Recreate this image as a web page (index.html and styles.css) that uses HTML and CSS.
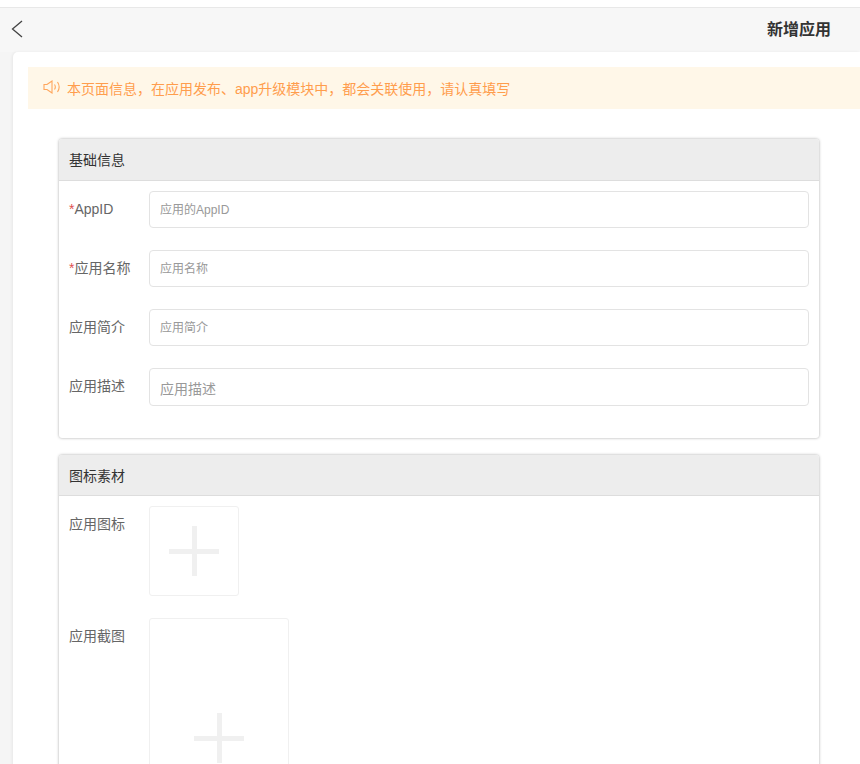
FILE: index.html
```html
<!DOCTYPE html>
<html lang="zh">
<head>
<meta charset="utf-8">
<title>新增应用</title>
<link rel="stylesheet" href="styles.css">
</head>
<body>
<header class="topbar">
  <svg class="back" width="12" height="18" viewBox="0 0 12 18"><path d="M11 1 L1.500 9 L11 17" fill="none" stroke="#444" stroke-width="1.3"/></svg>
  <h1 class="title">新增应用</h1>
</header>
<main class="main">
  <div class="notice">
    <svg class="speaker" width="18" height="14" viewBox="0 0 18 14"><path d="M1 4.5h3L9 1v12L4 9.5H1z M11.5 4.5c1 1.5 1 3.500 0 5 M14.500 2c2 3 2 7 0 10" fill="none" stroke="#ffa65c" stroke-width="1.100"/></svg>
    <span>本页面信息，在应用发布、app升级模块中，都会关联使用，请认真填写</span>
  </div>
  <section class="card first">
    <div class="card-head">基础信息</div>
    <div class="card-body">
      <div class="row">
        <label class="label"><i class="req">*</i>AppID</label>
        <input class="input" placeholder="应用的AppID">
      </div>
      <div class="row">
        <label class="label"><i class="req">*</i>应用名称</label>
        <input class="input" placeholder="应用名称">
      </div>
      <div class="row">
        <label class="label">应用简介</label>
        <input class="input" placeholder="应用简介">
      </div>
      <div class="row">
        <label class="label">应用描述</label>
        <textarea class="input area" placeholder="应用描述"></textarea>
      </div>
    </div>
  </section>
  <section class="card">
    <div class="card-head">图标素材</div>
    <div class="card-body media">
      <div class="row">
        <label class="label">应用图标</label>
        <div class="tile icon-tile"><span class="plus"></span></div>
      </div>
      <div class="row">
        <label class="label">应用截图</label>
        <div class="tile shot-tile"><span class="plus"></span></div>
      </div>
    </div>
  </section>
</main>
</body>
</html>
```
FILE: styles.css
```css
html, body {
  margin: 0;
  height: 764px;
  overflow: hidden;
}
body {
  background: #f5f5f5;
  padding-top: 7px;
  box-sizing: border-box;
  font-family: "Liberation Sans", "Noto Sans CJK SC", sans-serif;
  font-size: 14px;
  color: #666;
  position: relative;
}
body::before {
  content: "";
  position: absolute;
  inset: 0 0 auto 0;
  height: 7px;
  background: #fff;
}
.topbar {
  height: 44px;
  border-top: 1px solid #e8e8e8;
  background: #f7f7f7;
  display: flex;
  align-items: center;
  justify-content: space-between;
  padding: 0 29px 0 11px;
}
.back { display: block; margin-top: -2px; }
.title {
  margin: 0;
  font-size: 16px;
  font-weight: 700;
  color: #333;
  line-height: 44px;
}
.main {
  margin-left: 13px;
  padding-top: 15px;
  height: 720px;
  background: #fff;
  border-top-left-radius: 5px;
  box-shadow: -1px 0 3px rgba(0, 0, 0, .06);
}
.notice {
  margin-left: 15px;
  height: 42px;
  background: #fff7e8;
  color: #ff9d4d;
  display: flex;
  align-items: center;
  padding-left: 15px;
  gap: 6px;
  font-size: 14px;
}
.speaker { display: block; margin-top: -3px; }
.card {
  margin-left: 46px;
  width: 760px;
  box-sizing: border-box;
  margin-top: 17px;
  background: #fff;
  border-radius: 3px;
  box-shadow: 0 0 3px rgba(0, 0, 0, .35);
}
.card.first { margin-top: 30px; }
.card-head {
  height: 40px;
  line-height: 42px;
  padding-left: 10px;
  background: #ededed;
  border-bottom: 1px solid #ddd;
  border-radius: 3px 3px 0 0;
  color: #333;
}
.first .card-head { height: 41px; }
.card-body { padding: 10px; }
.row {
  display: flex;
  align-items: flex-start;
  margin-bottom: 22px;
}
.label {
  width: 80px;
  flex: none;
  line-height: 36px;
}
.req { font-style: normal; color: #e0524f; }
.input {
  flex: 1;
  min-width: 0;
  height: 37px;
  box-sizing: border-box;
  border: 1px solid #e3e3e3;
  border-radius: 4px;
  padding: 0 10px;
  font: 12px "Liberation Sans", "Noto Sans CJK SC", sans-serif;
  color: #555;
  outline: none;
  background: #fff;
}
.input::placeholder { color: #999; opacity: 1; }
.area {
  height: 38px;
  font-size: 14px;
  line-height: 20px;
  padding: 10px 10px 0;
  resize: none;
  display: block;
  overflow: hidden;
}
.tile {
  box-sizing: border-box;
  border: 1px solid #f0f0f0;
  border-radius: 3px;
  display: flex;
  align-items: center;
  justify-content: center;
  flex: none;
}
.icon-tile { width: 90px; height: 90px; }
.shot-tile { width: 140px; height: 240px; }
.plus {
  width: 50px;
  height: 50px;
  background:
    linear-gradient(#f0f0f0, #f0f0f0) center / 50px 5px no-repeat,
    linear-gradient(#f0f0f0, #f0f0f0) center / 5px 50px no-repeat;
  border-radius: 2px;
}
```
